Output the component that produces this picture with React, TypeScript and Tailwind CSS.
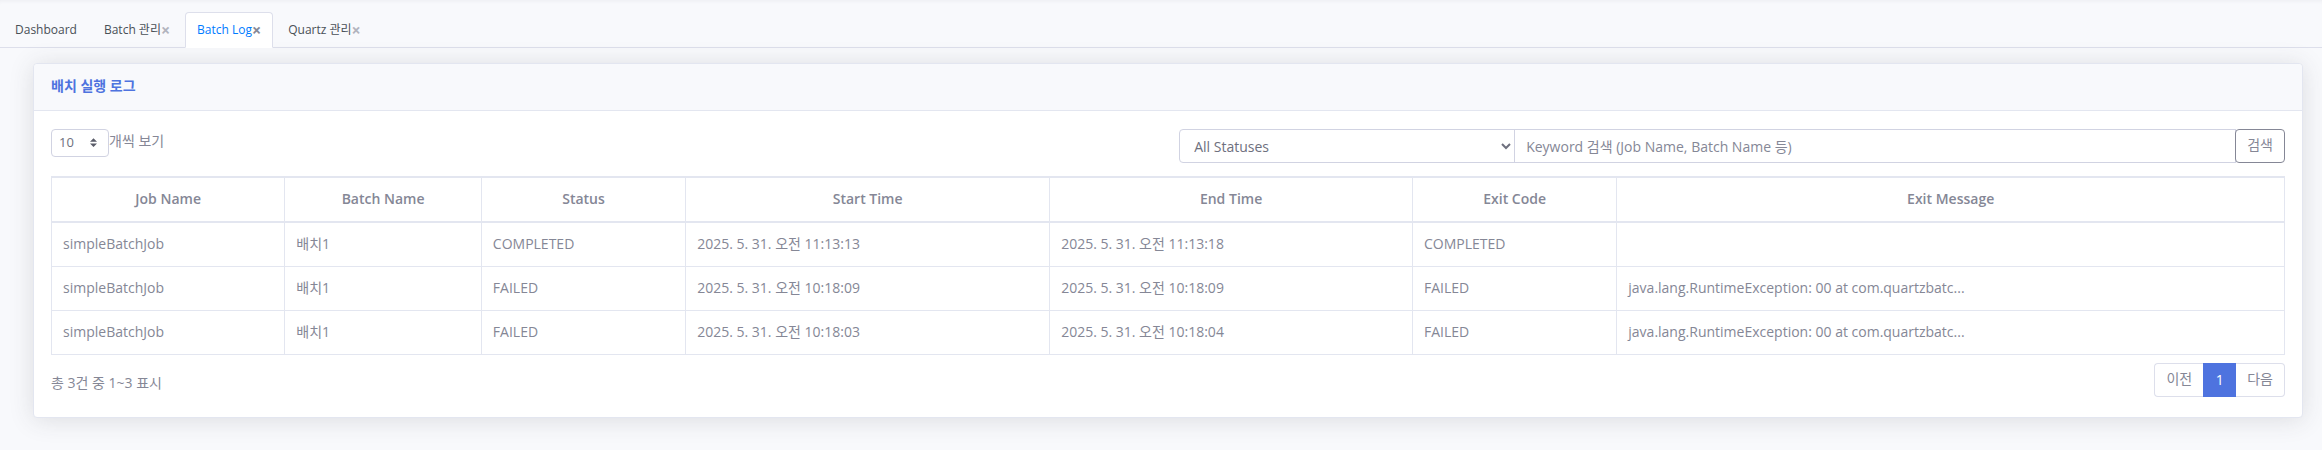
import React, { useState } from "react";

type Tab = { id: string; label: string; closable: boolean };

type LogRow = {
  job: string;
  batch: string;
  status: string;
  start: string;
  end: string;
  exitCode: string;
  exitMessage: string;
};

const tabs: Tab[] = [
  { id: "dashboard", label: "Dashboard", closable: false },
  { id: "batch", label: "Batch 관리", closable: true },
  { id: "log", label: "Batch Log", closable: true },
  { id: "quartz", label: "Quartz 관리", closable: true },
];

const columns = [
  { label: "Job Name", width: "w-[10.45%]" },
  { label: "Batch Name", width: "w-[8.8%]" },
  { label: "Status", width: "w-[9.15%]" },
  { label: "Start Time", width: "w-[16.3%]" },
  { label: "End Time", width: "w-[16.25%]" },
  { label: "Exit Code", width: "w-[9.15%]" },
  { label: "Exit Message", width: "w-[29.9%]" },
];

const rows: LogRow[] = [
  {
    job: "simpleBatchJob",
    batch: "배치1",
    status: "COMPLETED",
    start: "2025. 5. 31. 오전 11:13:13",
    end: "2025. 5. 31. 오전 11:13:18",
    exitCode: "COMPLETED",
    exitMessage: "",
  },
  {
    job: "simpleBatchJob",
    batch: "배치1",
    status: "FAILED",
    start: "2025. 5. 31. 오전 10:18:09",
    end: "2025. 5. 31. 오전 10:18:09",
    exitCode: "FAILED",
    exitMessage: "java.lang.RuntimeException: 00 at com.quartzbatc...",
  },
  {
    job: "simpleBatchJob",
    batch: "배치1",
    status: "FAILED",
    start: "2025. 5. 31. 오전 10:18:03",
    end: "2025. 5. 31. 오전 10:18:04",
    exitCode: "FAILED",
    exitMessage: "java.lang.RuntimeException: 00 at com.quartzbatc...",
  },
];

function TabBar() {
  const [active, setActive] = useState("log");
  return (
    <nav className="flex items-end gap-[3px] border-b border-[#dddfeb] pt-3 pl-[3px] text-xs leading-5 shadow-[inset_0_4px_4px_-3px_rgba(58,59,69,0.06)]">
      {tabs.map((tab) => {
        const isActive = tab.id === active;
        return (
          <div
            key={tab.id}
            className={
              isActive
                ? "-mb-px flex h-9 items-center rounded-t border border-b-white border-[#dddfeb] bg-white px-[11px] text-[#007bff]"
                : "-mb-px flex h-9 items-center border border-transparent px-[11px] text-[#495057]"
            }
          >
            <button type="button" onClick={() => setActive(tab.id)}>
              {tab.label}
            </button>
            {tab.closable && (
              <button
                type="button"
                aria-label={`${tab.label} 닫기`}
                className={
                  isActive
                    ? "text-base leading-5 font-bold text-[#858796]"
                    : "text-base leading-5 font-bold text-[#858796] opacity-60"
                }
              >
                ×
              </button>
            )}
          </div>
        );
      })}
    </nav>
  );
}

function Toolbar() {
  return (
    <div className="flex items-start justify-between">
      <label className="flex items-start">
        <span className="relative">
          <select
            defaultValue="10"
            className="block h-7 w-[58px] appearance-none rounded border border-[#d1d3e2] bg-white pb-[2px] pl-[7px] text-[13px] text-[#6e707e]"
          >
            <option>10</option>
            <option>25</option>
            <option>50</option>
          </select>
          <svg
            viewBox="0 0 4 5"
            className="pointer-events-none absolute top-[9px] right-3 h-[9px] w-[7px]"
            aria-hidden="true"
          >
            <path fill="#5a5c69" d="M2 0L0 2h4zm0 5L0 3h4z" />
          </svg>
        </span>
        <span className="leading-6">개씩 보기</span>
      </label>

      <form className="flex w-[49.5%]" onSubmit={(e) => e.preventDefault()}>
        <select
          aria-label="Status"
          className="h-[34px] w-[336px] shrink-0 rounded-l border border-[#d1d3e2] bg-white px-[10px] text-[#6e707e]"
        >
          <option>All Statuses</option>
          <option>COMPLETED</option>
          <option>FAILED</option>
        </select>
        <input
          type="text"
          aria-label="Keyword"
          placeholder="Keyword 검색 (Job Name, Batch Name 등)"
          className="-ml-px h-[34px] min-w-0 grow border border-[#d1d3e2] bg-white px-[11px] text-[#6e707e] placeholder:text-[#858796]"
        />
        <button
          type="submit"
          className="-ml-px h-[34px] shrink-0 rounded border border-[#858796] bg-white px-[11px] pb-[2px]"
        >
          검색
        </button>
      </form>
    </div>
  );
}

function LogTable() {
  return (
    <table className="mt-[13px] w-full table-fixed border-collapse border border-[#e3e6f0]">
      <thead>
        <tr>
          {columns.map((c) => (
            <th
              key={c.label}
              scope="col"
              className={`${c.width} h-[45px] border-x border-y-2 border-[#e3e6f0] px-[11px] pb-[2px] text-center font-semibold`}
            >
              {c.label}
            </th>
          ))}
        </tr>
      </thead>
      <tbody>
        {rows.map((r, i) => (
          <tr key={i}>
            {[r.job, r.batch, r.status, r.start, r.end, r.exitCode, r.exitMessage].map((v, j) => (
              <td key={j} className="h-11 truncate border border-[#e3e6f0] px-[11px]">
                {v}
              </td>
            ))}
          </tr>
        ))}
      </tbody>
    </table>
  );
}

function Footer() {
  return (
    <div className="mt-2 flex items-start justify-between">
      <p className="pt-2 leading-6">총 3건 중 1~3 표시</p>
      <nav aria-label="Pagination" className="flex leading-5">
        <button type="button" className="h-[34px] rounded-l border border-r-0 border-[#dddfeb] bg-white px-[11px] pb-[2px]">
          이전
        </button>
        <button type="button" aria-current="page" className="h-[34px] w-[33px] bg-[#4e73df] text-white">
          1
        </button>
        <button type="button" className="h-[34px] rounded-r border border-l-0 border-[#dddfeb] bg-white px-[11px] pb-[2px]">
          다음
        </button>
      </nav>
    </div>
  );
}

export default function App() {
  return (
    <div className="min-h-screen bg-[#f8f9fc] font-['Open_Sans','Noto_Sans_CJK_KR',sans-serif] text-sm text-[#858796]">
      <TabBar />
      <main className="pt-[15px] pr-[19px] pb-8 pl-[33px]">
        <section className="rounded border border-[#e3e6f0] bg-white shadow-[0_2px_25px_rgba(58,59,69,0.15)]">
          <header className="flex h-[47px] items-center rounded-t border-b border-[#e3e6f0] bg-[#f8f9fc] px-[17px] pb-[2px]">
            <h1 className="font-bold text-[#4e73df]">배치 실행 로그</h1>
          </header>
          <div className="px-[17px] pt-[18px] pb-5">
            <Toolbar />
            <LogTable />
            <Footer />
          </div>
        </section>
      </main>
    </div>
  );
}
